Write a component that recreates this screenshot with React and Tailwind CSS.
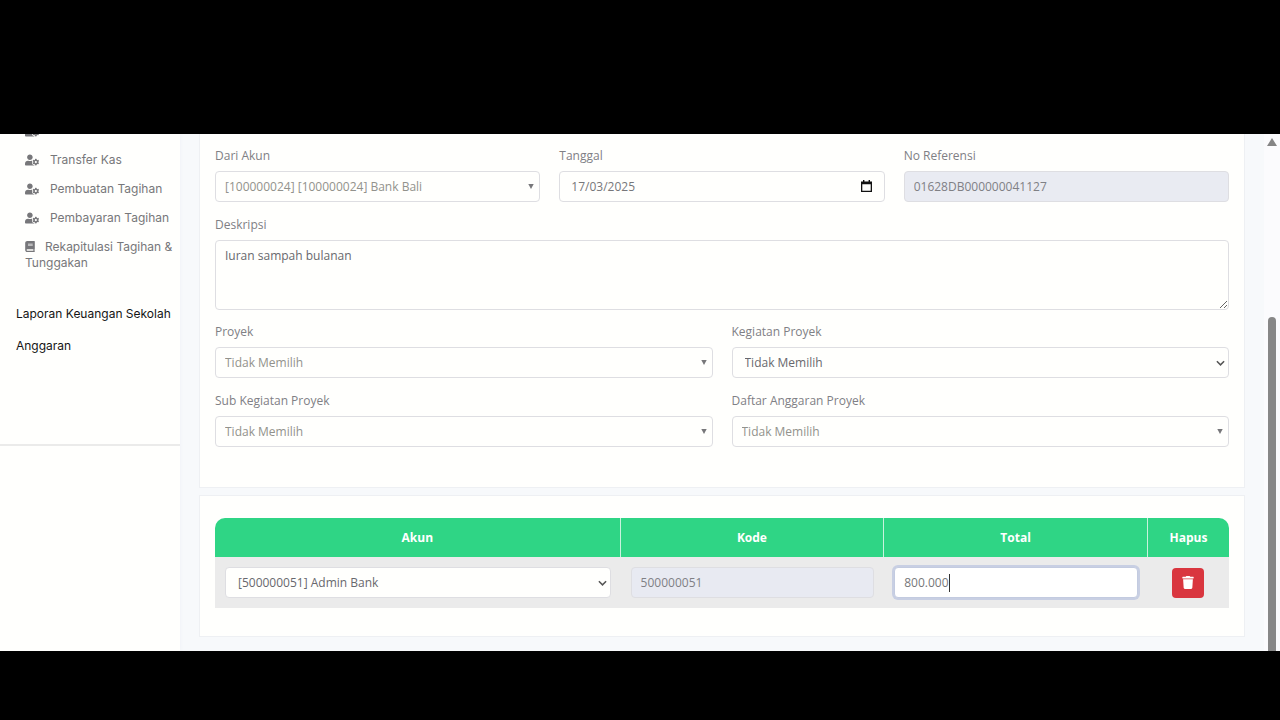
import { useState } from 'react'
import { FaUserCog, FaBook, FaTrash } from 'react-icons/fa'

const MENU = ['Transfer Kas', 'Pembuatan Tagihan', 'Pembayaran Tagihan']
const BOX = 'block w-full h-[31px] rounded-[4px] border border-[#dedee2] text-[12px] outline-none'

function Field({ id, label, children }) {
  return (
    <div className="min-w-0">
      <label htmlFor={id} className="block h-5 mb-[5px] text-[12px] leading-5 text-[#808085]">{label}</label>
      {children}
    </div>
  )
}

// searchable drop-down, small solid arrow
function SearchSelect({ id, value }) {
  return (
    <div className="relative">
      <select id={id} className={`${BOX} appearance-none bg-[#fffffd] pl-[9px] pr-6 text-[#92928c]`}>
        <option>{value}</option>
      </select>
      <svg viewBox="0 0 6 5" className="pointer-events-none absolute right-[6px] top-[13px] w-[6px] h-[5px] fill-[#77777a]">
        <path d="M0.3 0h5.4L3 5z" />
      </svg>
    </div>
  )
}

// plain drop-down, chevron arrow
function PlainSelect({ id, value, label }) {
  return (
    <div className="relative">
      <select id={id} aria-label={label} className={`${BOX} appearance-none bg-[#fffffd] pt-px pl-3 pr-6 text-[#68686d]`}>
        <option>{value}</option>
      </select>
      <svg viewBox="0 0 10 6" className="pointer-events-none absolute right-[4px] top-[13px] w-[9px] h-[6px] fill-none stroke-[#555] stroke-[1.7]">
        <path d="M1 1l4 4 4-4" />
      </svg>
    </div>
  )
}

function Sidebar() {
  return (
    <aside className="w-[180px] shrink-0 bg-[#fffffd] font-[Inter,sans-serif] text-[12px] shadow-[0_0_4px_#eef1f6]">
      <nav className="h-[312px] overflow-hidden border-b-2 border-[#ebebea]">
        <ul className="-mt-[18px] pl-[25px] text-[#77777a]">
          <li className="h-[29px] flex items-center">
            <FaUserCog className="w-[14px] h-[12px]" />
          </li>
          {MENU.map(m => (
            <li key={m} className="h-[29px]">
              <a href="#" className="h-full flex items-center gap-[11px]">
                <FaUserCog className="w-[14px] h-[12px]" />
                {m}
              </a>
            </li>
          ))}
          <li className="pt-[7px] leading-4">
            <a href="#">
              <FaBook className="inline-block align-[-1px] w-[10px] h-[11px] mr-[10px]" />
              Rekapitulasi Tagihan &amp; Tunggakan
            </a>
          </li>
        </ul>
        <ul className="pt-[27px] pl-4 text-[#151515]">
          <li className="h-8 flex items-center"><a href="#">Laporan Keuangan Sekolah</a></li>
          <li className="h-8 flex items-center"><a href="#">Anggaran</a></li>
        </ul>
      </nav>
    </aside>
  )
}

function TransactionForm() {
  const [tanggal, setTanggal] = useState('17/03/2025')
  const [deskripsi, setDeskripsi] = useState('Iuran sampah bulanan')

  return (
    <section className="border border-t-0 border-[#eef0f3] bg-[#fffffd] px-[15px] pt-3 pb-10">
      <div className="grid grid-cols-3 gap-x-[19px]">
        <Field id="dari" label="Dari Akun">
          <SearchSelect id="dari" value="[100000024] [100000024] Bank Bali" />
        </Field>
        <Field id="tanggal" label="Tanggal">
          <div className="relative">
            <input
              id="tanggal"
              value={tanggal}
              onChange={e => setTanggal(e.target.value)}
              className={`${BOX} bg-[#fffffd] px-[11px] text-[#77777a]`}
            />
            <button type="button" aria-label="Pilih tanggal" className="absolute right-[13px] top-[9px]">
              <svg viewBox="0 0 11 12" className="w-[11px] h-3">
                <path d="M0 1.5h11V12H0zM1.3 4.2v6.5h8.4V4.2z" fill="#111" fillRule="evenodd" />
                <path d="M2 0h1.4v2H2zM7.6 0H9v2H7.6z" fill="#111" />
              </svg>
            </button>
          </div>
        </Field>
        <Field id="ref" label="No Referensi">
          <input id="ref" readOnly value="01628DB000000041127" className={`${BOX} bg-[#e9ebf2] px-[9px] text-[#808085]`} />
        </Field>
      </div>

      <div className="mt-[13px] mb-3">
        <Field id="deskripsi" label="Deskripsi">
          <textarea
            id="deskripsi"
            value={deskripsi}
            onChange={e => setDeskripsi(e.target.value)}
            className="block w-full h-[70px] resize-y rounded-[4px] border border-[#dedee2] bg-[#fffffd] px-[9px] py-[5px] text-[12px] leading-5 text-[#68686d] outline-none"
          />
        </Field>
      </div>

      <div className="grid grid-cols-2 gap-x-[19px] gap-y-[13px]">
        <Field id="proyek" label="Proyek"><SearchSelect id="proyek" value="Tidak Memilih" /></Field>
        <Field id="kegiatan" label="Kegiatan Proyek"><PlainSelect id="kegiatan" value="Tidak Memilih" /></Field>
        <Field id="sub" label="Sub Kegiatan Proyek"><SearchSelect id="sub" value="Tidak Memilih" /></Field>
        <Field id="anggaran" label="Daftar Anggaran Proyek"><SearchSelect id="anggaran" value="Tidak Memilih" /></Field>
      </div>
    </section>
  )
}

function AccountTable() {
  const [total, setTotal] = useState('800.000')

  return (
    <section className="mt-[7px] border border-[#eef0f3] bg-[#fffffd] px-[15px] pt-[22px] pb-7">
      <table className="w-full table-fixed border-separate border-spacing-0 text-[12px]">
        <thead>
          <tr className="h-[39px] text-white [&>th]:bg-[#2fd585] [&>th]:font-bold">
            <th className="w-[40%] rounded-tl-[10px] border-r border-[#c9f2dd]">Akun</th>
            <th className="w-[26%] border-r border-[#c9f2dd]">Kode</th>
            <th className="w-[26%] border-r border-[#c9f2dd]">Total</th>
            <th className="w-[8%] rounded-tr-[10px]">Hapus</th>
          </tr>
        </thead>
        <tbody>
          <tr className="h-[51px] bg-[#ebebeb]">
            <td className="px-[10px]">
              <PlainSelect label="Akun" value="[500000051] Admin Bank" />
            </td>
            <td className="px-[10px]">
              <input aria-label="Kode" readOnly value="500000051" className={`${BOX} bg-[#e8eaf2] px-[9px] text-[#808085]`} />
            </td>
            <td className="px-[10px]">
              <div className="relative">
                <input
                  aria-label="Total"
                  value={total}
                  onChange={e => setTotal(e.target.value)}
                  className="block w-full h-[31px] rounded-[4px] border border-[#c3cbe0] bg-white px-[9px] text-[12px] text-[#77777a] outline-none ring-2 ring-[#c8cfe3]"
                />
                <span className="absolute left-[55px] top-[7px] w-px h-[18px] bg-[#333]" />
              </div>
            </td>
            <td className="text-center">
              <button type="button" aria-label="Hapus" className="inline-flex w-8 h-[30px] items-center justify-center rounded-[4px] bg-[#d9363f] align-middle text-white">
                <FaTrash className="w-[12px] h-[13px]" />
              </button>
            </td>
          </tr>
        </tbody>
      </table>
    </section>
  )
}

export default function App() {
  return (
    <div className="min-h-screen bg-black pt-[134px] pb-[69px] font-['Open_Sans','Noto_Sans',sans-serif]">
      <div className="flex overflow-hidden bg-[#f7f9fb]">
        <Sidebar />
        <main className="min-w-0 flex-1 pl-[19px] pr-[19px] pb-[14px]">
          <TransactionForm />
          <AccountTable />
        </main>
        <div className="w-4 shrink-0 bg-[#fbfbfd] flex flex-col items-center pt-1" aria-hidden="true">
          <svg viewBox="0 0 10 8" className="w-[10px] h-2 fill-[#858585]">
            <path d="M5 0l5 8H0z" />
          </svg>
          <div className="mt-[171px] w-2 flex-1 rounded-t-[4px] bg-[#878787]" />
        </div>
      </div>
    </div>
  )
}
